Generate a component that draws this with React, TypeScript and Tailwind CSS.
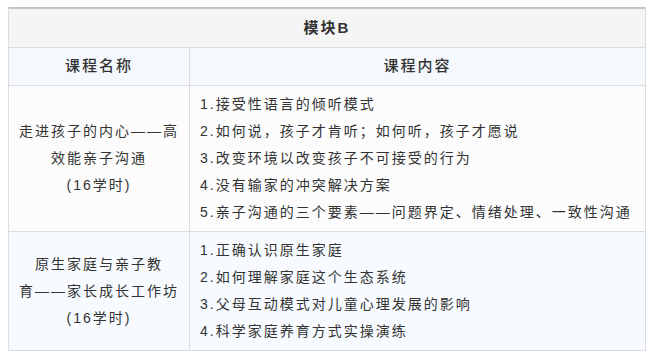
const font = { fontFamily: '"Liberation Sans", "Noto Sans CJK SC", sans-serif' }

interface Course {
  name: string[]
  items: string[]
  bg: string
}

const courses: Course[] = [
  {
    name: ['走进孩子的内心——高', '效能亲子沟通', '(16学时)'],
    items: [
      '1.接受性语言的倾听模式',
      '2.如何说，孩子才肯听；如何听，孩子才愿说',
      '3.改变环境以改变孩子不可接受的行为',
      '4.没有输家的冲突解决方案',
      '5.亲子沟通的三个要素——问题界定、情绪处理、一致性沟通',
    ],
    bg: 'bg-[#fcfcfc]',
  },
  {
    name: ['原生家庭与亲子教', '育——家长成长工作坊', '(16学时)'],
    items: [
      '1.正确认识原生家庭',
      '2.如何理解家庭这个生态系统',
      '3.父母互动模式对儿童心理发展的影响',
      '4.科学家庭养育方式实操演练',
    ],
    bg: 'bg-[#f7fbff]',
  },
]

export default function App() {
  return (
    <div className="w-[650px] h-[357px] bg-white pt-[7px] pl-[8px]" style={font}>
      <div className="w-[638px] border-t-2 border-t-[#c4c4c4] border-x border-x-[#dcdcdc] text-[#333] tracking-[2px]">
        {/* Title */}
        <div className="h-[39px] flex items-center justify-center bg-[#f5f5f5] border-b border-[#dcdcdc] text-[15px] font-bold">
          模块B
        </div>

        {/* Column headers */}
        <div className="grid grid-cols-[181px_1fr] bg-[#f5f9fe] border-b border-[#dcdcdc] text-[15px] font-medium">
          <div className="h-[37px] flex items-center justify-center border-r border-[#dcdcdc]">课程名称</div>
          <div className="h-[37px] flex items-center justify-center">课程内容</div>
        </div>

        {courses.map((c, i) => (
          <div key={i} className={`grid grid-cols-[181px_1fr] border-b border-[#dcdcdc] ${c.bg}`}>
            <div className="flex flex-col items-center justify-center border-r border-[#dcdcdc] text-[14px] leading-[27px]">
              {c.name.map((l) => (
                <div key={l}>{l}</div>
              ))}
            </div>
            <div className="py-[5px] pl-[10px] text-[14px] leading-[27px] whitespace-nowrap">
              {c.items.map((l) => (
                <div key={l}>{l}</div>
              ))}
            </div>
          </div>
        ))}
      </div>
    </div>
  )
}
